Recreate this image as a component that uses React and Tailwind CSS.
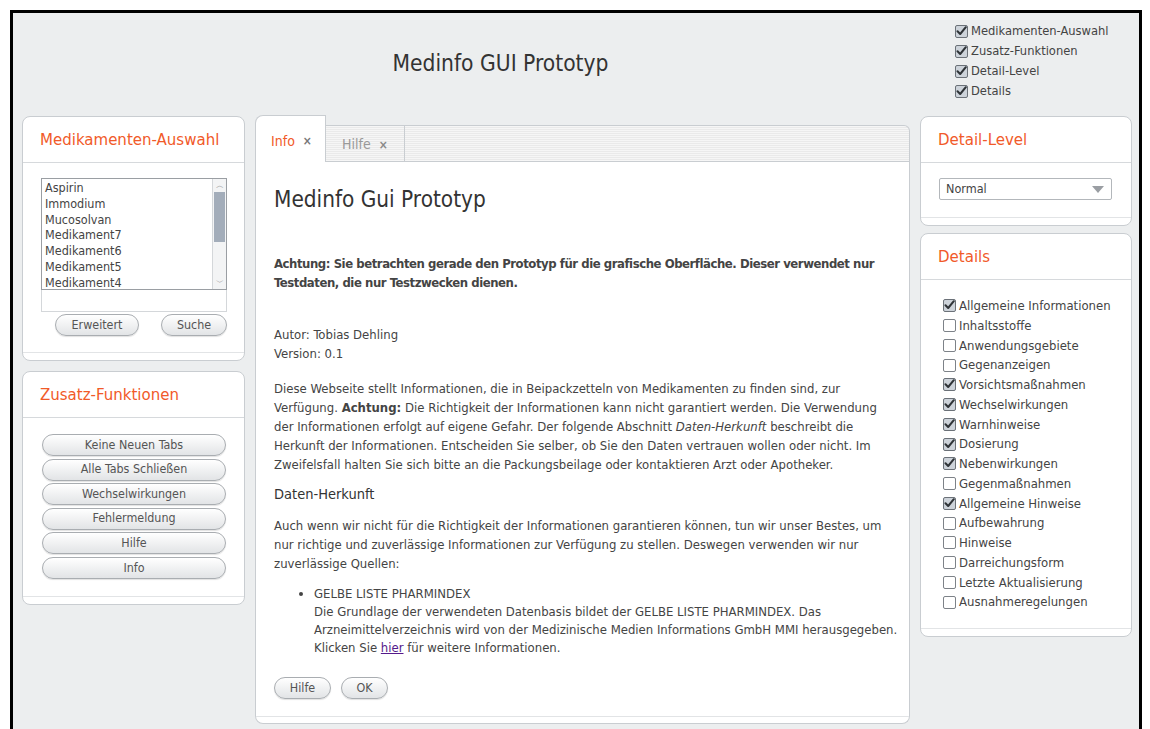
import { useState } from "react";

const FONT = "font-['DejaVu_Sans_Condensed','DejaVu_Sans','Noto_Sans',sans-serif]";

const headerToggles = ["Medikamenten-Auswahl", "Zusatz-Funktionen", "Detail-Level", "Details"];

const drugs = ["Aspirin", "Immodium", "Mucosolvan", "Medikament7", "Medikament6", "Medikament5", "Medikament4"];

const extraActions = ["Keine Neuen Tabs", "Alle Tabs Schließen", "Wechselwirkungen", "Fehlermeldung", "Hilfe", "Info"];

const detailSections = [
  ["Allgemeine Informationen", true],
  ["Inhaltsstoffe", false],
  ["Anwendungsgebiete", false],
  ["Gegenanzeigen", false],
  ["Vorsichtsmaßnahmen", true],
  ["Wechselwirkungen", true],
  ["Warnhinweise", true],
  ["Dosierung", true],
  ["Nebenwirkungen", true],
  ["Gegenmaßnahmen", false],
  ["Allgemeine Hinweise", true],
  ["Aufbewahrung", false],
  ["Hinweise", false],
  ["Darreichungsform", false],
  ["Letzte Aktualisierung", false],
  ["Ausnahmeregelungen", false],
];

function CheckBox({ checked }) {
  return (
    <span
      className={`mr-[3px] inline-flex h-[13px] w-[13px] shrink-0 items-center justify-center rounded-[2px] border ${
        checked ? "border-[#6b7178] bg-[#cdd3da]" : "border-[#7d8288] bg-white"
      }`}
    >
      {checked && (
        <svg width="11" height="10" viewBox="0 0 11 10" className="-mt-[1px]">
          <path d="M1.5 5.2 L4.2 8 L9.8 1.2" fill="none" stroke="#2f3438" strokeWidth="2" strokeLinecap="round" strokeLinejoin="round" />
        </svg>
      )}
    </span>
  );
}

function Toggle({ label, checked }) {
  return (
    <label className="flex h-[20px] items-center text-[12.8px] text-[#444]">
      <CheckBox checked={checked} />
      {label}
    </label>
  );
}

function Pill({ children, className = "" }) {
  return (
    <button
      className={`flex h-[22px] items-center justify-center rounded-full border border-[#a9adb1] bg-gradient-to-b from-white to-[#e2e4e6] text-[12.4px] text-[#555] shadow-[0_1px_1px_rgba(0,0,0,0.12)] ${className}`}
    >
      {children}
    </button>
  );
}

function Panel({ title, children }) {
  return (
    <div className="rounded-[8px] border border-[#c9cdd1] bg-white">
      <div className="flex h-[46px] items-center whitespace-nowrap border-b border-[#d6d9dc] px-[17px] text-[16.7px] text-[#f15a29]">
        {title}
      </div>
      {children}
      <div className="h-[8px] border-t border-[#e2e4e6]" />
    </div>
  );
}

function DrugList() {
  const [selected, setSelected] = useState(null);
  return (
    <div className="flex h-[112px] border border-[#9a9ea3] bg-white">
      <ul className="flex-1 overflow-hidden pl-[3px] pt-[1px] text-[12.5px] leading-[15.8px] text-[#444]">
        {drugs.map((d) => (
          <li key={d} onClick={() => setSelected(d)} className={selected === d ? "bg-[#dde3ea]" : ""}>
            {d}
          </li>
        ))}
      </ul>
      <div className="flex w-[14px] flex-col border-l border-[#d4d7da] bg-[#f3f4f5]">
        <span className="flex h-[13px] items-center justify-center text-[8px] text-[#999]">︿</span>
        <div className="mx-[1px] h-[50px] bg-[#a3adba]" />
        <div className="flex-1" />
        <span className="flex h-[13px] items-center justify-center text-[8px] text-[#999]">﹀</span>
      </div>
    </div>
  );
}

const stripes =
  "bg-[repeating-linear-gradient(180deg,#f6f6f6_0px,#f6f6f6_1px,#eaeaea_1px,#eaeaea_2px)]";

// one entry per printed line so the text breaks where the layout expects
function Lines({ lines, className = "" }) {
  return (
    <div className={className}>
      {lines.map((l, i) => (
        <div key={i} className="whitespace-nowrap">
          {l}
        </div>
      ))}
    </div>
  );
}

function InfoTab() {
  return (
    <div className="pl-[18px] pt-[23px] text-[13px] leading-[19px] text-[#444]">
      <h1 className="text-[22.4px] leading-[28px] text-[#333]">Medinfo Gui Prototyp</h1>
      <Lines
        className="mt-[41px] font-bold tracking-[-0.45px]"
        lines={[
          "Achtung: Sie betrachten gerade den Prototyp für die grafische Oberfläche. Dieser verwendet nur",
          "Testdaten, die nur Testzwecken dienen.",
        ]}
      />
      <Lines className="mt-[33px]" lines={["Autor: Tobias Dehling", "Version: 0.1"]} />
      <Lines
        className="mt-[16px]"
        lines={[
          "Diese Webseite stellt Informationen, die in Beipackzetteln von Medikamenten zu finden sind, zur",
          <>
            Verfügung. <b>Achtung:</b> Die Richtigkeit der Informationen kann nicht garantiert werden. Die Verwendung
          </>,
          <>
            der Informationen erfolgt auf eigene Gefahr. Der folgende Abschnitt <i>Daten-Herkunft</i> beschreibt die
          </>,
          "Herkunft der Informationen. Entscheiden Sie selber, ob Sie den Daten vertrauen wollen oder nicht. Im",
          "Zweifelsfall halten Sie sich bitte an die Packungsbeilage oder kontaktieren Arzt oder Apotheker.",
        ]}
      />
      <h2 className="mt-[10px] text-[14.5px] leading-[20px] text-[#333]">Daten-Herkunft</h2>
      <Lines
        className="mt-[12px]"
        lines={[
          "Auch wenn wir nicht für die Richtigkeit der Informationen garantieren können, tun wir unser Bestes, um",
          "nur richtige und zuverlässige Informationen zur Verfügung zu stellen. Deswegen verwenden wir nur",
          "zuverlässige Quellen:",
        ]}
      />
      <ul className="mt-[11.5px] list-disc pl-[40px] leading-[18px]">
        <li>
          <Lines
            lines={[
              "GELBE LISTE PHARMINDEX",
              "Die Grundlage der verwendeten Datenbasis bildet der GELBE LISTE PHARMINDEX. Das",
              "Arzneimittelverzeichnis wird von der Medizinische Medien Informations GmbH MMI herausgegeben.",
              <>
                Klicken Sie{" "}
                <a href="#" className="text-[#551a8b] underline">
                  hier
                </a>{" "}
                für weitere Informationen.
              </>,
            ]}
          />
        </li>
      </ul>
      <div className="mt-[20px] flex gap-[10px] pb-[16px]">
        <Pill className="w-[57px]">Hilfe</Pill>
        <Pill className="w-[47px]">OK</Pill>
      </div>
    </div>
  );
}

export default function App() {
  const [tab, setTab] = useState("info");

  return (
    <div className={`bg-white pl-[10px] pr-[8px] pt-[10px] ${FONT}`}>
      <div className="h-[740px] border-x-[3px] border-t-[3px] border-black bg-[#eceeef] pl-[9px] pr-[7px]">
        {/* header */}
        <div className="flex h-[103px]">
          <div className="flex flex-1 items-center justify-center pb-[2px] pl-[24px] text-[22.6px] text-[#333]">
            Medinfo GUI Prototyp
          </div>
          <div className="w-[177px] pt-[8px]">
            {headerToggles.map((t) => (
              <Toggle key={t} label={t} checked />
            ))}
          </div>
        </div>

        <div className="flex items-start gap-[10px]">
          {/* left column */}
          <div className="flex w-[223px] flex-col gap-[10px]">
            <Panel title="Medikamenten-Auswahl">
              <div className="pl-[18px] pr-[17px] pt-[15px] pb-[16px]">
                <DrugList />
                <input className="block h-[22px] w-full border border-t-0 border-[#d4d7da] bg-white outline-none" />
                <div className="mt-[2px] flex justify-between pl-[14px]">
                  <Pill className="w-[84px]">Erweitert</Pill>
                  <Pill className="w-[66px]">Suche</Pill>
                </div>
              </div>
            </Panel>
            <Panel title="Zusatz-Funktionen">
              <div className="flex flex-col gap-[2.6px] pl-[19px] pr-[18px] pt-[16px] pb-[17px]">
                {extraActions.map((a) => (
                  <Pill key={a} className="w-full">
                    {a}
                  </Pill>
                ))}
              </div>
            </Panel>
          </div>

          {/* center: tabbed content */}
          <div className="min-w-0 flex-1">
            <div className="flex h-[46px] items-end">
              <button
                onClick={() => setTab("info")}
                className="flex h-[47px] w-[71px] items-center gap-[8px] rounded-tl-[8px] border-x border-t border-[#c9cdd1] bg-white pl-[15px] pt-[4px] text-[14px] text-[#f15a29]"
              >
                Info <span className="text-[12px] font-bold text-[#777]">×</span>
              </button>
              <div className={`flex h-[37px] flex-1 rounded-tr-[6px] border-b border-t border-r border-[#c9cdd1] ${stripes}`}>
                <button
                  onClick={() => setTab("hilfe")}
                  className="flex w-[79px] items-center gap-[8px] border-r border-[#c9cdd1] pl-[16px] pt-[2px] text-[14px] text-[#999]"
                >
                  Hilfe <span className="text-[12px] font-bold text-[#888]">×</span>
                </button>
              </div>
            </div>
            <div className="h-[562px] overflow-hidden rounded-b-[8px] border-x border-b border-[#c9cdd1] bg-white">
              <div className="flex h-full flex-col">
                <div className="flex-1">{tab === "info" ? <InfoTab /> : <InfoTab />}</div>
                <div className="h-[7px] border-t border-[#e2e4e6]" />
              </div>
            </div>
          </div>

          {/* right column */}
          <div className="flex w-[212px] flex-col gap-[7px]">
            <Panel title="Detail-Level">
              <div className="pl-[18px] pr-[19px] pt-[15px] pb-[17px]">
                <div className="flex h-[22px] items-center justify-between rounded-[2px] border border-[#b3b7bb] bg-white pl-[6px] pr-[7px] text-[12.5px] text-[#444]">
                  Normal
                  <svg width="12" height="7" viewBox="0 0 12 7">
                    <path d="M0 0 H12 L6 7 Z" fill="#9a9ea3" />
                  </svg>
                </div>
              </div>
            </Panel>
            <Panel title="Details">
              <div className="pl-[22px] pt-[16px] pb-[16px]">
                {detailSections.map(([label, on]) => (
                  <label key={label} className="flex h-[19.75px] items-center text-[13px] text-[#444]">
                    <CheckBox checked={on} />
                    {label}
                  </label>
                ))}
              </div>
            </Panel>
          </div>
        </div>
      </div>
    </div>
  );
}
